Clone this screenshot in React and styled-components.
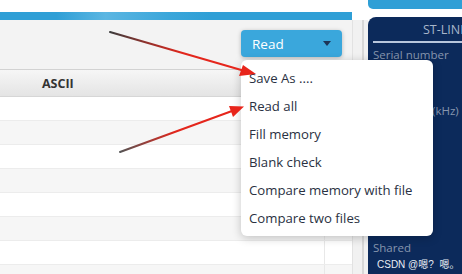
import React from "react";
import styled, { createGlobalStyle } from "styled-components";

const Global = createGlobalStyle`
  html, body { margin: 0; padding: 0; background: #ffffff; }
  body { font-family: "Open Sans", "Noto Sans", sans-serif; }
  #root { width: 462px; height: 274px; overflow: hidden; }
`;

const Screen = styled.div`
  position: relative;
  width: 462px;
  height: 274px;
  display: flex;
  overflow: hidden;
  background: #fff;
`;

const Main = styled.div`
  width: 352px;
  flex-shrink: 0;
  display: flex;
  flex-direction: column;
  overflow: hidden;
  & > * { flex-shrink: 0; }
`;

const TopStrip = styled.div`
  height: 12px;
  background: #ffffff;
`;

const BlueBar = styled.div`
  height: 8px;
  background: linear-gradient(90deg, #2f9fd6 0%, #2f9fd6 16%, #5bb6e2 30%, #3aa6da 48%, #2f9fd6 60%, #2f9fd6 100%);
`;

const Toolbar = styled.div`
  height: 49px;
  background: #f3f3f3;
  display: flex;
  justify-content: flex-end;
  align-items: flex-start;
  padding: 10px 10px 0 0;
  box-sizing: border-box;
`;

const ReadButton = styled.div`
  width: 101px;
  height: 27px;
  border-radius: 4px;
  background: #3aa7dc;
  box-shadow: 0 1px 4px rgba(0, 0, 0, 0.25);
  display: flex;
  align-items: center;
  justify-content: space-between;
  padding: 0 11px 0 11px;
  box-sizing: border-box;
  color: #ffffff;
  font-size: 13.5px;
`;

const Caret = styled.span`
  width: 0;
  height: 0;
  border-left: 4px solid transparent;
  border-right: 4px solid transparent;
  border-top: 5px solid #1d3557;
`;

const Header = styled.div`
  height: 28px;
  box-sizing: border-box;
  border-top: 1px solid #d2d2d2;
  border-bottom: 1px solid #d6d6d6;
  background: linear-gradient(180deg, #f6f6f6 0%, #e4e4e4 100%);
  display: flex;
  align-items: center;
  padding-left: 42px;
  font-weight: 700;
  font-size: 12.5px;
  color: #333333;
`;

const Rows = styled.div`
  display: flex;
  flex-direction: column;
  & > * { flex-shrink: 0; }
`;

const Row = styled.div`
  height: 24px;
  box-sizing: border-box;
  background: ${(p) => (p.$alt ? "#f6f6f6" : "#ffffff")};
  border-bottom: 1px solid #ececec;
  display: grid;
  grid-template-columns: 325px 1fr;
`;

const Cell = styled.div`
  border-right: ${(p) => (p.$sep ? "1px solid #e8e8e8" : "none")};
`;

const Gutter = styled.div`
  width: 16px;
  flex-shrink: 0;
  display: flex;
  flex-direction: column;
`;

const GutterTop = styled.div`
  height: 20px;
  background: #ffffff;
`;

const GutterBody = styled.div`
  flex: 1;
  background: #f1f1f1;
  border-left: 1px solid #e2e2e2;
  display: flex;
  justify-content: center;
`;

const GutterLine = styled.div`
  width: 2px;
  margin-left: 4px;
  background: #d7d7d7;
`;

const Side = styled.div`
  flex: 1;
  min-width: 0;
  display: flex;
  flex-direction: column;
  gap: 8px;
`;

const SideTop = styled.div`
  height: 9px;
  flex-shrink: 0;
  background: #2f9fd6;
  border-bottom-left-radius: 5px;
`;

const Panel = styled.div`
  flex: 1;
  background: #0c2a5b;
  border-top-left-radius: 8px;
  display: flex;
  flex-direction: column;
  padding: 5px 0 0 5px;
  font-size: 11.5px;
  overflow: hidden;
`;

const PanelTitle = styled.div`
  color: #a8b6ca;
  font-size: 12.5px;
  padding-left: 50px;
  white-space: nowrap;
  height: 16px;
  line-height: 16px;
`;

const PanelRule = styled.div`
  height: 2px;
  background: #b8c6dc;
  margin-top: 3px;
`;

const Label = styled.div`
  color: #8796ae;
  white-space: nowrap;
  margin-top: ${(p) => p.$mt || 0}px;
  padding-left: ${(p) => p.$pl || 0}px;
`;

const Watermark = styled.div`
  position: absolute;
  left: 377px;
  top: 256px;
  color: #e8ecf3;
  font-family: "Liberation Sans", "Noto Sans CJK SC", sans-serif;
  font-size: 10px;
  white-space: pre;
`;

const Menu = styled.div`
  position: absolute;
  left: 241px;
  top: 60px;
  width: 192px;
  background: #ffffff;
  border-radius: 6px;
  box-shadow: 0 2px 10px rgba(0, 0, 0, 0.22);
  padding: 4px 0;
  display: flex;
  flex-direction: column;
`;

const MenuItem = styled.div`
  height: 28px;
  display: flex;
  align-items: center;
  padding-left: 8px;
  color: #2a3142;
  font-size: 13.2px;
  white-space: nowrap;
`;

const Overlay = styled.svg`
  position: absolute;
  left: 0;
  top: 0;
  pointer-events: none;
`;

const items = [
  "Save As ....",
  "Read all",
  "Fill memory",
  "Blank check",
  "Compare memory with file",
  "Compare two files",
];

export default function App() {
  const rows = Array.from({ length: 8 }, (_, i) => i);
  return (
    <>
      <Global />
      <Screen>
        <Main>
          <TopStrip />
          <BlueBar />
          <Toolbar>
            <ReadButton>
              <span>Read</span>
              <Caret />
            </ReadButton>
          </Toolbar>
          <Header>ASCII</Header>
          <Rows>
            {rows.map((i) => (
              <Row key={i} $alt={i % 2 === 1}>
                <Cell $sep />
                <Cell />
              </Row>
            ))}
          </Rows>
        </Main>
        <Gutter>
          <GutterTop />
          <GutterBody>
            <GutterLine />
          </GutterBody>
        </Gutter>
        <Side>
          <SideTop />
          <Panel>
            <PanelTitle>ST-LINK</PanelTitle>
            <PanelRule />
            <Label $mt={4}>Serial number</Label>
            <Label $mt={41} $pl={59}>(kHz)</Label>
            <Label $mt={122}>Shared</Label>
          </Panel>
        </Side>

        <Menu>
          {items.map((t) => (
            <MenuItem key={t}>{t}</MenuItem>
          ))}
        </Menu>

        <Overlay width="462" height="274" viewBox="0 0 462 274">
          <defs>
            <linearGradient id="g1" x1="110" y1="32" x2="255" y2="74" gradientUnits="userSpaceOnUse">
              <stop offset="0" stopColor="#3c3c3c" />
              <stop offset="0.5" stopColor="#e2261c" />
              <stop offset="1" stopColor="#e8251b" />
            </linearGradient>
            <linearGradient id="g2" x1="120" y1="152" x2="243" y2="107" gradientUnits="userSpaceOnUse">
              <stop offset="0" stopColor="#555555" />
              <stop offset="0.45" stopColor="#e2261c" />
              <stop offset="1" stopColor="#e8251b" />
            </linearGradient>
          </defs>
          <line x1="110" y1="32" x2="243" y2="70.5" stroke="url(#g1)" strokeWidth="2" strokeLinecap="round" />
          <polygon points="256,74 239,76 243,65" fill="#e8251b" />
          <line x1="120" y1="152" x2="232" y2="111" stroke="url(#g2)" strokeWidth="2" strokeLinecap="round" />
          <polygon points="244,106.5 233,117 229,106" fill="#e8251b" />
        </Overlay>
        <Watermark>CSDN @嗯?  嗯。</Watermark>
      </Screen>
    </>
  );
}
